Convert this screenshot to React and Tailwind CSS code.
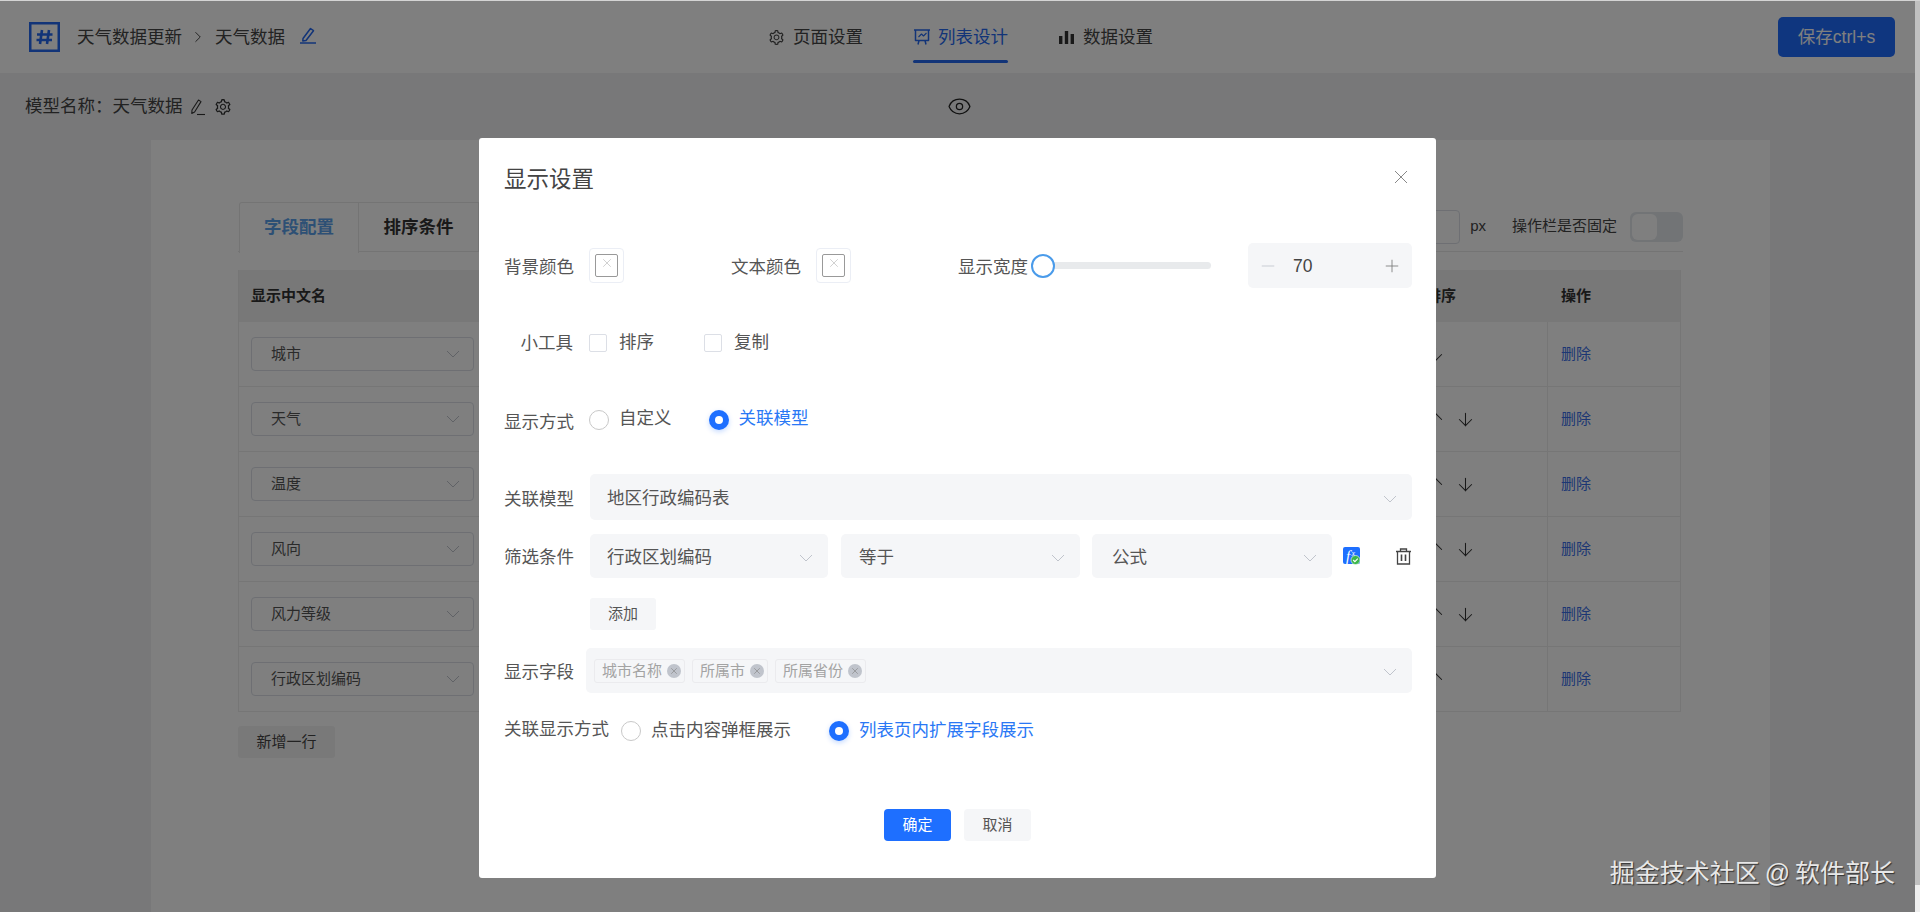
import React from 'react';
import { AiOutlineSetting } from 'react-icons/ai';
import { ArrowDown, ArrowUp, Eye, X, Minus, Plus, ChevronRight } from 'lucide-react';

const rows = [
  { name: '城市', up: false, down: true },
  { name: '天气', up: true, down: true },
  { name: '温度', up: true, down: true },
  { name: '风向', up: true, down: true },
  { name: '风力等级', up: true, down: true },
  { name: '行政区划编码', up: true, down: false },
];

function Chevron({ className = '' }) {
  return (
    <svg width="14" height="8" viewBox="0 0 14 8" fill="none" stroke="#c0c4cc" strokeWidth="1" className={className}>
      <path d="M1 1l6 6 6-6" />
    </svg>
  );
}

function Logo() {
  return (
    <svg width="31" height="30" viewBox="0 0 31 30" fill="none" stroke="#2468f0">
      <rect x="1.25" y="1.25" width="28.5" height="27.5" strokeWidth="2.5" />
      <path d="M13 8l-2 14M20 8l-2 14M8 12.5h15.5M7.5 18h15.5" strokeWidth="2.6" />
    </svg>
  );
}

function EditUnderline() {
  return (
    <svg width="18" height="18" viewBox="0 0 18 18" fill="none" stroke="#2468f0" strokeWidth="1.5" strokeLinejoin="round">
      <path d="M4 12.5 11.5 2.5l3 2.2L7 14.5l-3.2.4z" />
      <path d="M1 17h16" />
    </svg>
  );
}

function EditSlim() {
  return (
    <svg width="16" height="18" viewBox="0 0 16 18" fill="none" stroke="#333" strokeWidth="1.1" strokeLinejoin="round">
      <path d="M2 12 8.5 2l2.5 1.6L4.6 14l-2.8 1.4z" />
      <path d="M7 16.5h8" />
    </svg>
  );
}

function BoardIcon() {
  return (
    <svg width="18" height="18" viewBox="0 0 18 18" fill="none" stroke="#2468f0" strokeWidth="1.5" strokeLinejoin="round">
      <path d="M1 2h16M2.5 2v10.5h13V2" />
      <path d="M5.5 9l3-3 2 2 3-3" strokeWidth="1.1" />
      <path d="M6 12.5 5 16.5M12 12.5l1 4" />
    </svg>
  );
}

function BarsIcon() {
  return (
    <svg width="15" height="15" viewBox="0 0 15 15" fill="#333">
      <rect x="0" y="6" width="3.4" height="8" />
      <rect x="5.8" y="1" width="3.4" height="13" />
      <rect x="11.6" y="4" width="3.4" height="10" />
    </svg>
  );
}

function TrashIcon() {
  return (
    <svg width="17" height="17" viewBox="0 0 17 17" fill="none" stroke="#444" strokeWidth="1.3">
      <path d="M1 3.5h15M5.5 3.5V1h6v2.5M2.5 3.5v12.5h12V3.5" />
      <path d="M6.5 6.5v6.5M10.5 6.5v6.5" strokeWidth="1.6" />
    </svg>
  );
}

function FxIcon() {
  return (
    <svg width="18" height="18" viewBox="0 0 18 18">
      <rect x="0" y="0" width="17" height="17" rx="2" fill="#1e6fff" />
      <text x="3" y="13.5" fill="#fff" fontSize="15" fontStyle="italic" fontFamily="Liberation Serif, serif">f</text>
      <text x="8.5" y="8.5" fill="#fff" fontSize="8" fontStyle="italic" fontFamily="Liberation Serif, serif">x</text>
      <circle cx="12.5" cy="13" r="4.5" fill="#3bb54a" stroke="#fff" strokeWidth="0.6" />
      <path d="M10.2 13l1.7 1.7 2.9-3" fill="none" stroke="#fff" strokeWidth="1.1" />
    </svg>
  );
}

function Label({ children, className = '' }) {
  return <span className={`text-[17.5px] text-[#555] whitespace-nowrap ${className}`}>{children}</span>;
}

function Swatch() {
  return (
    <div className="flex h-[35px] w-[35px] shrink-0 items-center justify-center rounded-[4px] border border-[#ebeef5]">
      <div className="flex h-[23px] w-[23px] items-start justify-center rounded-[2px] border border-[#999] pt-px">
        <X size={14} strokeWidth={1} color="#b0b0b0" />
      </div>
    </div>
  );
}

function Radio({ checked, children, className = '', textClass = 'mb-1' }) {
  return (
    <div className={`flex items-center ${className}`}>
      {checked ? (
        <span className="flex h-5 w-5 shrink-0 items-center justify-center rounded-full bg-[#1e6fff] shadow-[0_2px_5px_rgba(30,111,255,0.25)]">
          <span className="h-2 w-2 rounded-full bg-white" />
        </span>
      ) : (
        <span className="h-5 w-5 shrink-0 rounded-full border border-[#c8c8c8]" />
      )}
      <span className={`ml-[10px] text-[17.5px] whitespace-nowrap ${textClass} ${checked ? 'text-[#2a78f5]' : 'text-[#555]'}`}>{children}</span>
    </div>
  );
}

function Check({ children, className = '' }) {
  return (
    <div className={`flex items-center ${className}`}>
      <span className="h-[18px] w-[18px] shrink-0 rounded-[2px] border border-[#dcdfe6]" />
      <span className="mb-[2px] ml-[12px] text-[17.5px] whitespace-nowrap text-[#555]">{children}</span>
    </div>
  );
}

function Select({ children, className = '' }) {
  return (
    <div className={`flex items-center justify-between rounded-[5px] bg-[#f5f6f8] pr-[15px] pl-[17px] ${className}`}>
      <span className="mt-[3px] text-[17.5px] whitespace-nowrap text-[#555]">{children}</span>
      <Chevron className="mt-[4px]" />
    </div>
  );
}

function Tag({ children, className = '' }) {
  return (
    <div className={`flex h-6 items-center rounded-[3px] border border-[#ebebee] bg-[#f5f6f8] pr-[3px] pl-[7px] ${className}`}>
      <span className="mt-px text-[15px] whitespace-nowrap text-[#a3a3a3]">{children}</span>
      <span className="ml-[5px] flex h-[14px] w-[14px] items-center justify-center rounded-full bg-[#c0c4cc]">
        <X size={10} strokeWidth={1.4} color="#7d7d7d" />
      </span>
    </div>
  );
}

function Modal() {
  return (
    <div className="flex h-[740px] w-[957px] flex-col rounded-[3px] bg-white pt-[27px] pr-[24px] pl-[25px]">
      <div className="flex h-[30px] items-center justify-between">
        <span className="text-[22.5px] text-[#444]">显示设置</span>
        <svg width="14" height="14" viewBox="0 0 14 14" fill="none" stroke="#888" strokeWidth="1" className="mr-1 mb-[6px]">
          <path d="M1 1l12 12M13 1 1 13" />
        </svg>
      </div>

      <div className="mt-[48px] flex h-[45px] items-center">
        <Label className="mt-[3px] w-[69px] text-right">背景颜色</Label>
        <div className="ml-4"><Swatch /></div>
        <Label className="mt-[3px] ml-[107px] w-[69px]">文本颜色</Label>
        <div className="ml-[16px]"><Swatch /></div>
        <Label className="mt-[3px] ml-[107px] w-[69px]">显示宽度</Label>
        <div className="ml-1 flex w-[180px] items-center">
          <span className="relative z-10 h-6 w-6 shrink-0 rounded-full border-[2.5px] border-[#4a9bea] bg-white" />
          <span className="-ml-3 h-[7px] flex-1 rounded-r-full bg-[#e8eaec]" />
        </div>
        <div className="ml-[37px] flex h-[45px] w-[164px] items-center rounded-[5px] bg-[#f5f6f8] px-[10px]">
          <Minus size={20} strokeWidth={1} color="#c0c4cc" />
          <span className="mt-[2px] ml-[15px] text-[17.5px] text-[#444]">70</span>
          <Plus size={20} strokeWidth={1} color="#777" className="ml-auto" />
        </div>
      </div>

      <div className="mt-[45px] flex h-5 items-center">
        <Label className="w-[69px] text-right">小工具</Label>
        <Check className="ml-4">排序</Check>
        <Check className="ml-[50px]">复制</Check>
      </div>

      <div className="mt-[57px] flex h-5 items-center">
        <Label className="mt-[4px] w-[69px] text-right">显示方式</Label>
        <Radio className="ml-4">自定义</Radio>
        <Radio checked className="ml-[37px]">关联模型</Radio>
      </div>

      <div className="mt-[44px] flex h-[46px] items-center">
        <Label className="mt-[4px] w-[69px] text-right">关联模型</Label>
        <Select className="ml-[17px] h-[46px] flex-1">地区行政编码表</Select>
      </div>

      <div className="mt-[14px] flex h-[44px] items-center">
        <Label className="mt-[2px] w-[69px] text-right">筛选条件</Label>
        <Select className="ml-[17px] h-[44px] w-[238px]">行政区划编码</Select>
        <Select className="ml-[13px] h-[44px] w-[239px]"><span className="ml-px">等于</span></Select>
        <Select className="ml-[12px] h-[44px] w-[240px]"><span className="ml-[3px]">公式</span></Select>
        <div className="ml-[11px] flex"><FxIcon /></div>
        <div className="ml-auto flex"><TrashIcon /></div>
      </div>

      <div className="mt-[20px] ml-[86px] flex h-8 w-[66px] items-center justify-center rounded-[3px] bg-[#f5f6f8] text-[15px] text-[#555]">添加</div>

      <div className="mt-[18px] flex h-[45px] items-center">
        <Label className="mt-[3px] w-[69px] text-right">显示字段</Label>
        <div className="ml-[13px] flex h-[45px] flex-1 items-center rounded-[5px] bg-[#f5f6f8] pr-[15px] pl-2">
          <Tag>城市名称</Tag>
          <Tag className="ml-[7px]">所属市</Tag>
          <Tag className="ml-[7px]">所属省份</Tag>
          <Chevron className="mt-[3px] ml-auto" />
        </div>
      </div>

      <div className="mt-[27px] flex h-[21px] items-center">
        <Label className="mb-[2px] w-[105px]">关联显示方式</Label>
        <Radio className="ml-[12px]" textClass="mb-[1px]">点击内容弹框展示</Radio>
        <Radio checked className="ml-[38px]" textClass="mb-[1px]">列表页内扩展字段展示</Radio>
      </div>

      <div className="mt-[68px] flex justify-center gap-[13px] pr-px">
        <button className="h-8 w-[67px] rounded-[4px] bg-[#1e6fff] pt-px text-[15px] text-white">确定</button>
        <button className="h-8 w-[67px] rounded-[4px] bg-[#f5f6f8] pt-px text-[15px] text-[#555]">取消</button>
      </div>
    </div>
  );
}

function TableRow({ row }) {
  return (
    <div className="grid h-[65px] grid-cols-[240px_1fr_134px_132px] border-b border-[#ececec]">
      <div className="flex items-center pl-[12px]">
        <div className="flex h-[34px] w-[223px] items-center justify-between rounded-[4px] border border-[#dcdfe6] pr-[13px] pl-[19px]">
          <span className="text-[15px] text-[#555]">{row.name}</span>
          <Chevron />
        </div>
      </div>
      <div />
      <div className="flex items-center gap-[9px] border-r border-[#ececec] pl-[11px]">
        {row.up && <ArrowUp size={21} strokeWidth={1.2} color="#333" />}
        {row.down && <ArrowDown size={21} strokeWidth={1.2} color="#333" />}
      </div>
      <div className="flex items-center pl-[13px] text-[15px] text-[#3a6fe8]">删除</div>
    </div>
  );
}

function Header() {
  return (
    <div className="grid h-[72px] grid-cols-[1fr_auto_1fr] items-center bg-white pr-5 pl-[26px]">
      <div className="ml-[3px] flex items-center text-[17.5px] text-[#444]">
        <Logo />
        <span className="ml-[17px]">天气数据更新</span>
        <ChevronRight size={18} strokeWidth={1.2} color="#333" className="ml-[7px]" />
        <span className="ml-[8px]">天气数据</span>
        <span className="mb-1 ml-[14px] flex"><EditUnderline /></span>
      </div>
      <div className="flex h-full items-center text-[17.5px] text-[#444]">
        <AiOutlineSetting size={17} color="#444" />
        <span className="ml-2">页面设置</span>
        <div className="relative ml-[50px] flex h-full items-center text-[#2468f0]">
          <BoardIcon />
          <span className="ml-[7px]">列表设计</span>
          <span className="absolute right-0 bottom-[10px] left-0 h-[3px] rounded-full bg-[#2468f0]" />
        </div>
        <div className="ml-[51px] flex items-center">
          <BarsIcon />
          <span className="ml-[9px]">数据设置</span>
        </div>
      </div>
      <div className="flex justify-end">
        <button className="h-10 w-[117px] rounded-[5px] bg-[#1e6cff] text-[17.5px] text-white">保存ctrl+s</button>
      </div>
    </div>
  );
}

function Card() {
  return (
    <div className="ml-[151px] h-[772px] w-[1619px] bg-white pt-[62px] pr-[87px] pl-[87px]">
      <div className="flex h-[50px] items-center justify-between border-b border-[#e8e8e8]">
        <div className="flex h-[50px] pl-px">
          <div className="-mb-px flex h-[51px] w-[120px] items-center justify-center rounded-tl-[3px] border-x border-t border-[#e8e8e8] bg-white text-[17.5px] font-bold text-[#5aa0ea]">字段配置</div>
          <div className="flex w-[120px] items-center justify-center border-t border-r border-[#e8e8e8] text-[17.5px] font-bold text-[#333]">排序条件</div>
        </div>
        <div className="flex items-center">
          <div className="h-[34px] w-[120px] rounded-[4px] border border-[#dcdfe6]" />
          <span className="ml-[10px] text-[15px] text-[#444]">px</span>
          <span className="ml-[26px] text-[15px] text-[#444]">操作栏是否固定</span>
          <div className="ml-[13px] flex h-[30px] w-[53px] items-center rounded-[6px] bg-[#e4e8ec] pl-[2px]">
            <span className="h-[26px] w-[25px] rounded-[6px] bg-white" />
          </div>
        </div>
      </div>

      <div className="mt-[18px] mr-[2px] border-x border-[#ececec]">
        <div className="grid h-[52px] grid-cols-[240px_1fr_134px_132px] items-center bg-[#f0f0f0] text-[15px] font-bold text-[#333]">
          <span className="pl-[12px]">显示中文名</span>
          <span />
          <span className="pl-3">排序</span>
          <span className="pl-[13px]">操作</span>
        </div>
        {rows.map((row) => (
          <TableRow key={row.name} row={row} />
        ))}
      </div>

      <button className="mt-[14px] h-8 w-[97px] rounded-[3px] bg-[#f3f3f3] text-[15px] text-[#444]">新增一行</button>
    </div>
  );
}

export default function App() {
  return (
    <div className="relative flex h-[912px] flex-col overflow-hidden bg-[#f0f1f3] font-['Liberation_Sans','Noto_Sans_CJK_SC',sans-serif]">
      <div className="relative z-30 h-px shrink-0 bg-[#d4d4d4]" />
      <div className="relative flex flex-1">
        <div className="relative flex-1">
          <Header />
          <div className="grid h-[67px] grid-cols-[1fr_auto_1fr] items-center pr-[22px] pl-[25px]">
            <div className="flex items-center text-[17.5px] text-[#444]">
              <span>模型名称：</span>
              <span>天气数据</span>
              <span className="ml-[7px] flex"><EditSlim /></span>
              <AiOutlineSetting size={18} color="#333" className="ml-2" />
            </div>
            <Eye size={25} strokeWidth={1.2} color="#222" />
            <div />
          </div>
          <Card />

          {/* mask + dialog */}
          <div className="absolute inset-0 flex justify-center bg-black/50 pt-[137px]">
            <Modal />
          </div>
        </div>
        <div className="flex w-[5px] shrink-0 flex-col bg-[#c0c0c0]">
          <div className="mt-auto h-[27px] bg-[#eeeeee]" />
        </div>
      </div>
      <div className="absolute right-[25px] bottom-[24px] z-20 text-[25px] leading-[30px] text-[#e8e8e8] [word-spacing:-2px] [text-shadow:1px_1px_1px_#333]">掘金技术社区 @ 软件部长</div>
    </div>
  );
}
